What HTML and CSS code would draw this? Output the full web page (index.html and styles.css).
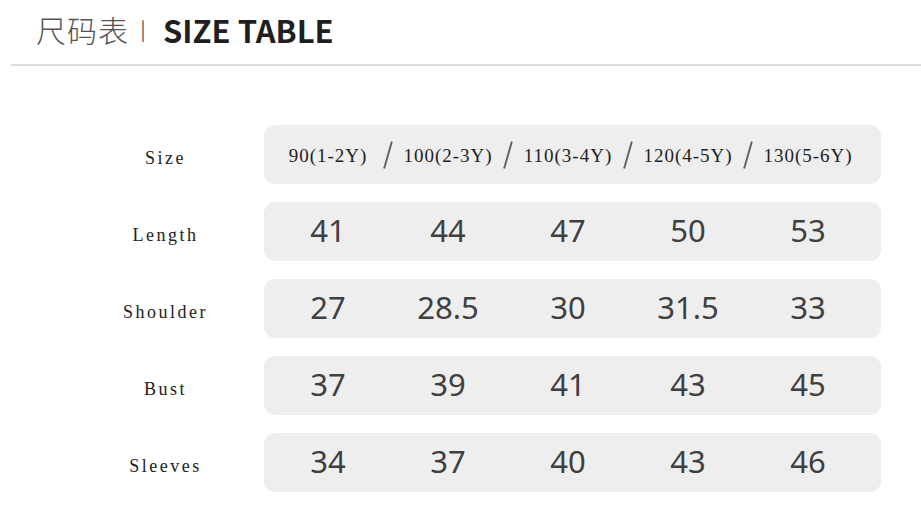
FILE: index.html
```html
<!DOCTYPE html>
<html lang="zh-CN">
<head>
<meta charset="utf-8">
<title>尺码表 | SIZE TABLE</title>
<link rel="stylesheet" href="styles.css">
</head>
<body>
<header class="head">
  <h1 class="title"><span class="zh">尺码表</span><span class="bar">丨</span><span class="en">SIZE TABLE</span></h1>
</header>
<main class="table">
  <div class="row">
    <div class="label">Size</div>
    <div class="pill sizes">
      <div class="cell">90(1-2Y)</div>
      <span class="slash"></span>
      <div class="cell">100(2-3Y)</div>
      <span class="slash"></span>
      <div class="cell">110(3-4Y)</div>
      <span class="slash"></span>
      <div class="cell">120(4-5Y)</div>
      <span class="slash"></span>
      <div class="cell">130(5-6Y)</div>
    </div>
  </div>
  <div class="row">
    <div class="label">Length</div>
    <div class="pill nums"><div class="cell">41</div><div class="cell">44</div><div class="cell">47</div><div class="cell">50</div><div class="cell">53</div></div>
  </div>
  <div class="row">
    <div class="label">Shoulder</div>
    <div class="pill nums"><div class="cell">27</div><div class="cell">28.5</div><div class="cell">30</div><div class="cell">31.5</div><div class="cell">33</div></div>
  </div>
  <div class="row">
    <div class="label">Bust</div>
    <div class="pill nums"><div class="cell">37</div><div class="cell">39</div><div class="cell">41</div><div class="cell">43</div><div class="cell">45</div></div>
  </div>
  <div class="row">
    <div class="label">Sleeves</div>
    <div class="pill nums"><div class="cell">34</div><div class="cell">37</div><div class="cell">40</div><div class="cell">43</div><div class="cell">46</div></div>
  </div>
</main>
</body>
</html>
```
FILE: styles.css
```css
* { box-sizing: border-box; }
html, body { margin: 0; padding: 0; background: #ffffff; }
body {
  width: 921px;
  height: 511px;
  overflow: hidden;
  font-family: "Noto Sans", "Noto Sans CJK SC", sans-serif;
}
.head {
  margin-left: 11px;
  height: 66px;
  border-bottom: 2px solid #dcdcdc;
  padding-left: 25px;
  padding-top: 9px;
}
.title {
  margin: 0;
  display: flex;
  align-items: center;
  height: 40px;
  font-weight: normal;
  font-family: "Noto Sans CJK SC", sans-serif;
  white-space: nowrap;
}
.zh {
  font-size: 30px;
  color: #555555;
  font-weight: 300;
  letter-spacing: 1px;
}
.bar {
  font-size: 24px;
  color: #555555;
  font-weight: 300;
  margin: 0 8px 0 2px;
}
.en {
  font-size: 31px;
  font-weight: 700;
  color: #1f1f1f;
  letter-spacing: 0;
}
.table {
  padding-top: 59px;
  padding-left: 67px;
  display: flex;
  flex-direction: column;
  gap: 18px;
}
.row {
  display: flex;
  align-items: center;
  height: 59px;
}
.label {
  width: 197px;
  text-align: center;
  font-family: "Liberation Serif", serif;
  font-size: 18px;
  letter-spacing: 2.5px;
  color: #222222;
  padding-top: 7px;
}
.pill {
  width: 617px;
  height: 59px;
  background: #efeeef;
  border-radius: 11px;
  display: flex;
  align-items: center;
  padding-left: 4px;
}
.cell {
  width: 120px;
  text-align: center;
  white-space: nowrap;
}
.nums .cell {
  font-family: "Noto Sans", sans-serif;
  font-size: 31px;
  color: #404040;
  padding-bottom: 4px;
}
.sizes .cell {
  font-family: "Liberation Serif", serif;
  font-size: 19px;
  color: #222222;
  letter-spacing: 1px;
  padding-top: 2px;
}
.slash {
  width: 0;
  height: 28px;
  display: flex;
  justify-content: center;
}
.slash::before {
  content: "";
  flex: none;
  width: 2px;
  height: 28px;
  background: #666666;
  transform: rotate(16deg);
}
```
